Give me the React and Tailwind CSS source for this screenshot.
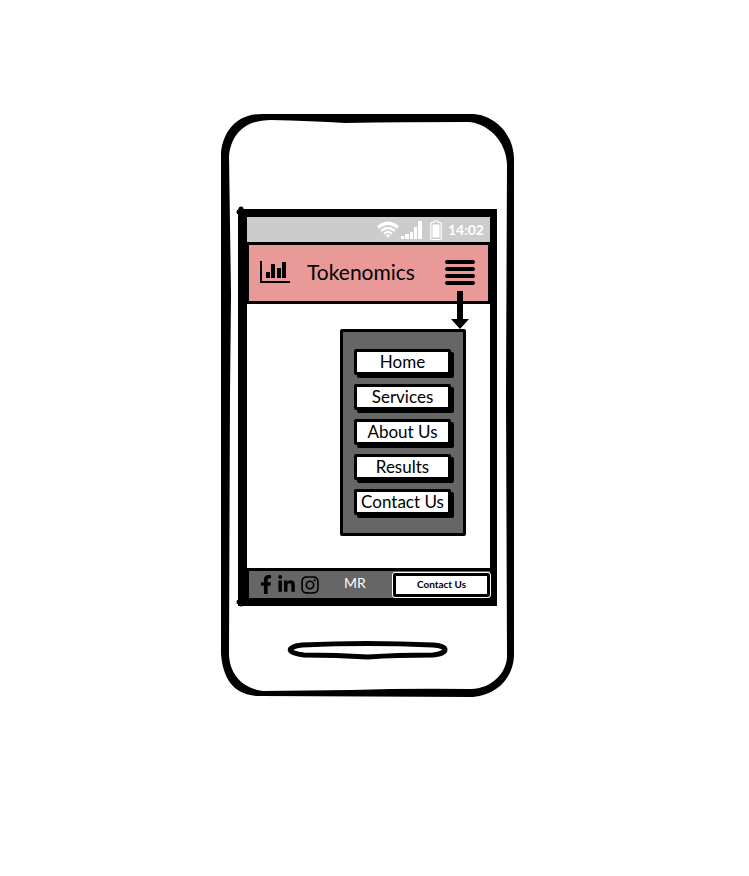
import { FaFacebookF, FaLinkedinIn, FaInstagram } from "react-icons/fa";

const links = ["Home", "Services", "About Us", "Results", "Contact Us"];

function PhoneOutline() {
  return (
    <svg className="absolute inset-0 h-full w-full" viewBox="0 0 293 584" preserveAspectRatio="none" aria-hidden="true">
      <path
        fillRule="evenodd"
        d="M0 38C3 16 16 0 41 0L252 0C272 1 292 18 293 44L293 543C292 564 277 582 252 584L41 583C13 584 2 566 0 541Z
           M8 42C10 24 20 6 50 6Q90 7 124 9Q180 8 247 8C266 9 285 26 286 50L285 280L286 543C286 560 270 576 250 576Q190 575 130 577L42 578C20 575 8 560 8 540L9 280L10 180Z"
      />
    </svg>
  );
}

function ScreenCorners() {
  return (
    <svg className="absolute -top-3 -left-[11px] h-[402px] w-[262px]" viewBox="0 0 262 402" preserveAspectRatio="none" aria-hidden="true">
      <path d="M5 10V4M3 7h6M5 392v7M3 397h6M255 7h3" fill="none" stroke="black" strokeWidth="5" strokeLinecap="round" />
    </svg>
  );
}

function ChartIcon() {
  return (
    <svg className="h-6 w-[31px]" viewBox="0 0 31 24" aria-hidden="true">
      <path d="M0 1h2v20h28v2H0zM6 12h4v6H6zM11 4h4v14h-4zM17 8h4v10h-4zM22 2h4v16h-4z" />
    </svg>
  );
}

function StatusBar() {
  return (
    <div className="flex h-[25px] items-center justify-end bg-[#cccccc] pr-1.5 text-white">
      <svg className="mr-0.5 h-[18px] w-[22px]" viewBox="0 0 22 18" fill="none" stroke="currentColor" aria-hidden="true">
        <path d="M1 6.5Q11-2 21 6.5" strokeWidth="3.2" />
        <path d="M4.2 9.8Q11 4 17.8 9.8" strokeWidth="2.4" />
        <path d="M7 12.6Q11 9 15 12.6" strokeWidth="2.2" />
        <path d="M8.6 14.2Q11 12.2 13.4 14.2L11 17z" fill="currentColor" stroke="none" />
      </svg>
      <svg className="mr-2 h-[18px] w-[21px]" viewBox="0 0 21 18" fill="currentColor" aria-hidden="true">
        <path d="M0 15h3v3H0zM4 13h4v5H4zM9 11h3v7H9zM13 6h3v12h-3zM17 0h4v18h-4z" />
      </svg>
      <svg className="mr-1.5 h-5 w-3" viewBox="0 0 12 20" aria-hidden="true">
        <path d="M4 1h4v1.5h2.2q1 0 1 1v15q0 1-1 1H1.8q-1 0-1-1v-15q0-1 1-1H4z" fill="none" stroke="currentColor" strokeWidth="1.2" />
        <path d="M2.5 4.5h7v13h-7z" fill="currentColor" />
      </svg>
      <span className="text-[14px] font-bold leading-5">14:02</span>
    </div>
  );
}

export default function App() {
  return (
    <main className="flex min-h-screen justify-center bg-white pt-[114px] pr-[14px] font-['Lato',sans-serif] text-black">
      <div className="relative w-[293px] self-start px-[17px] pt-[95px] pb-[37px]">
        <PhoneOutline />
        <div className="relative border-y-8 border-r-[7px] border-l-[9px] border-black bg-white">
          <ScreenCorners />
          <div className="relative">
            <StatusBar />
            <header className="relative flex h-[62px] items-center border-x-2 border-y-[3px] border-black bg-[#ea9999] pr-[13px] pb-0.5 pl-[11px]">
              <ChartIcon />
              <h1 className="ml-4 flex-1 text-[21px] leading-6">Tokenomics</h1>
              <button type="button" aria-label="Menu" className="flex w-[30px] flex-col gap-[3px]">
                <span className="h-1 w-full rounded-xs bg-black" />
                <span className="h-1 w-full rounded-xs bg-black" />
                <span className="h-1 w-full rounded-xs bg-black" />
                <span className="h-1 w-full rounded-xs bg-black" />
              </button>
              <svg className="absolute top-[46px] right-[19px] z-10 h-[38px] w-[18px]" viewBox="0 0 18 38" aria-hidden="true">
                <path d="M6 0h6v28h6L9 38 0 28h6z" />
              </svg>
            </header>
            <div className="flex justify-end pt-[25px] pr-6 pb-8">
              <nav className="w-[126px] rounded-xs border-[3px] border-black bg-[#666666] pt-[17px] pr-[9px] pb-[18px] pl-[11px]">
                <ul className="flex flex-col gap-[9px]">
                  {links.map((label) => (
                    <li key={label} className="pr-[3px]">
                      <button
                        type="button"
                        className="block w-full rounded-xs border-[3px] border-black bg-white text-center text-[17px] leading-5 whitespace-nowrap shadow-[3px_3px_0_#000]"
                      >
                        {label}
                      </button>
                    </li>
                  ))}
                </ul>
              </nav>
            </div>
            <footer className="flex h-[30px] items-center border-t-[3px] border-l-2 border-black bg-[#666666]">
              <div className="flex flex-1 items-center gap-1 pl-2.5">
                <a href="#facebook" aria-label="Facebook"><FaFacebookF className="h-[19px] w-[14px]" /></a>
                <a href="#linkedin" aria-label="LinkedIn"><FaLinkedinIn className="size-[19px]" /></a>
                <a href="#instagram" aria-label="Instagram"><FaInstagram className="size-5" /></a>
                <span className="ml-5 pb-1 text-[14px] leading-5 text-white">MR</span>
              </div>
              <button type="button" className="h-6 w-[97px] rounded-xs border-[3px] border-black bg-white text-[10px] font-bold outline outline-white">
                Contact Us
              </button>
            </footer>
          </div>
        </div>
        <svg className="relative mx-auto mt-[35px] block h-[19px] w-[163px]" viewBox="0 0 163 19" aria-hidden="true">
          <path
            d="M16 4Q80 1 147 4C163 5 163 12 147 14Q110 14 82 16Q50 14 18 14C0 12 0 6 16 4Z"
            fill="none"
            stroke="black"
            strokeWidth="5"
          />
        </svg>
      </div>
    </main>
  );
}
